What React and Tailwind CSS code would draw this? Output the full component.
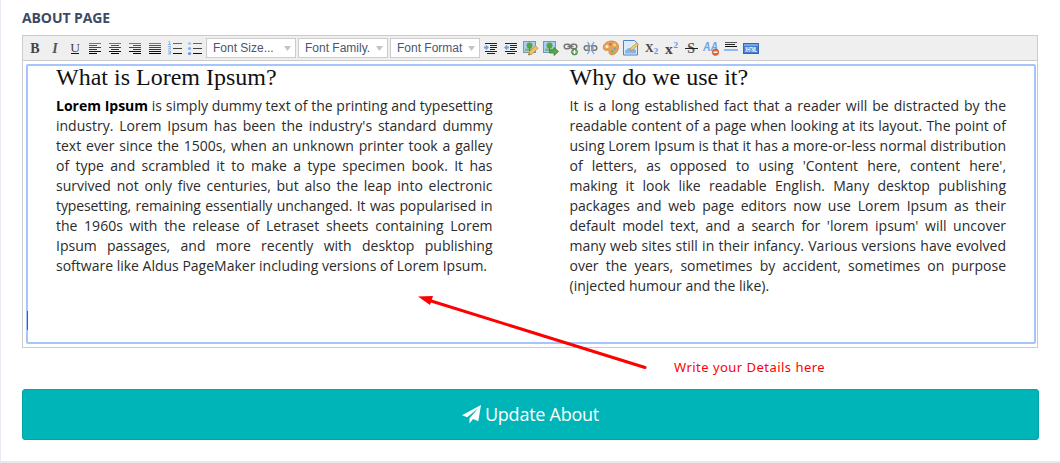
import React from "react";

function Icon({ children, label }) {
  return (
    <svg className="block h-5 w-5 shrink-0" viewBox="0 0 20 20" role="img" aria-label={label}>
      {children}
    </svg>
  );
}

function Lines({ label, rows }) {
  return (
    <Icon label={label}>
      {rows.map(([x, w], i) => (
        <rect key={i} x={x} y={[5, 7, 9, 11, 13, 15][i]} width={w} height="1" fill={["#777", "#555", "#444", "#333", "#111", "#000"][i]} />
      ))}
    </Icon>
  );
}

function ListIcon({ label, children }) {
  return (
    <Icon label={label}>
      {children}
      <rect x="8" y="5" width="9" height="1" fill="#666" />
      <rect x="8" y="10" width="9" height="1" fill="#444" />
      <rect x="8" y="15" width="9" height="1" fill="#111" />
    </Icon>
  );
}

function IndentIcon({ label, out }) {
  return (
    <Icon label={label}>
      <path d="M4 5.500h12M9 7.500h7M9 9.500h7M9 11.500h5M4 13.500h12M6 15.500h8" stroke="#222" />
      {out ? (
        <path d="M3 9.500 6.200 6.500v2H8v2H6.200v2z" fill="#6ba2f0" />
      ) : (
        <path d="M8 9.500 4.800 6.500v2H3v2h1.800v2z" fill="#6ba2f0" />
      )}
    </Icon>
  );
}

function Picture() {
  return (
    <>
      <rect x="2.500" y="3.500" width="12" height="11" fill="#a9cdf4" stroke="#7594c8" />
      <rect x="4" y="10.500" width="9" height="2.500" fill="#7dbb68" />
      <circle cx="8.500" cy="7.500" r="3" fill="#55a643" />
      <path d="M8.500 9v4" stroke="#6b7f42" />
    </>
  );
}

function Chain() {
  return (
    <g fill="none" stroke="#777" strokeWidth="1.500">
      <rect x="3.200" y="6.200" width="6" height="4.600" rx="2.300" />
      <rect x="9.800" y="6.200" width="6" height="4.600" rx="2.300" />
      <path d="M6.500 8.500h6" />
    </g>
  );
}

function Select({ text }) {
  return (
    <div className="flex h-5 w-[90px] shrink-0 items-center justify-between border border-[#ccc] bg-white pr-1 pl-[6px] font-['Liberation_Sans',Arial,sans-serif] text-[12px] leading-[18px] text-[#4a5672]">
      <span className="whitespace-nowrap">{text}</span>
      <svg className="h-[5px] w-[7px]" viewBox="0 0 7 5" aria-hidden="true">
        <path d="M0 0h7L3.500 5z" fill="#c4c4c4" />
      </svg>
    </div>
  );
}

function Toolbar() {
  const serif = "Liberation Serif, serif";
  return (
    <div className="flex h-[25px] items-start border-b border-[#ccc] bg-[#efefef] pt-[2px] pl-[2px]">
      <Icon label="Bold">
        <text x="10" y="14.500" textAnchor="middle" fontFamily={serif} fontWeight="700" fontSize="14" fill="#444">B</text>
      </Icon>
      <Icon label="Italic">
        <text x="10" y="14.500" textAnchor="middle" fontFamily={serif} fontWeight="700" fontStyle="italic" fontSize="14" fill="#555">I</text>
      </Icon>
      <Icon label="Underline">
        <text x="10" y="13.500" textAnchor="middle" fontFamily={serif} fontSize="13.500" fill="#444">U</text>
        <rect x="6" y="15" width="8" height="1" fill="#111" />
      </Icon>
      <Lines label="Align left" rows={[[4, 12], [4, 8], [4, 12], [4, 8], [4, 12], [4, 8]]} />
      <Lines label="Align center" rows={[[4, 12], [6, 8], [4, 12], [6, 8], [4, 12], [6, 8]]} />
      <Lines label="Align right" rows={[[4, 12], [8, 8], [4, 12], [8, 8], [4, 12], [8, 8]]} />
      <Lines label="Justify" rows={[[4, 12], [4, 12], [4, 12], [4, 12], [4, 12], [4, 12]]} />
      <ListIcon label="Numbered list">
        <path d="M3.500 3.500h1v3M3 6.500h3M3 8.500h2.500v1l-2 1.500H6M3 13h2.500v3H3M3.500 14.500h2" fill="none" stroke="#8ab2ee" />
      </ListIcon>
      <ListIcon label="Bullet list">
        <circle cx="4.500" cy="5.500" r="1.600" fill="#a5c5f5" />
        <circle cx="4.500" cy="10.500" r="1.600" fill="#83b0f2" />
        <circle cx="4.500" cy="15.500" r="1.600" fill="#5f9aed" />
      </ListIcon>
      <div className="flex gap-[2px] px-px">
        <Select text="Font Size..." />
        <Select text="Font Family." />
        <Select text="Font Format" />
      </div>
      <IndentIcon label="Indent" />
      <IndentIcon label="Outdent" out />
      <Icon label="Edit image">
        <Picture />
        <path d="m7.500 17 .8-3.200 6.200-6 2.500 2.500-6.200 6z" fill="#f5c261" stroke="#c48c37" strokeWidth=".8" />
        <path d="m7.500 17 .5-1.800 1.300 1.300z" fill="#654" />
      </Icon>
      <Icon label="Insert image">
        <Picture />
        <path d="M8.500 12h4.500V9.500l4.500 4-4.500 4V15H8.500z" fill="#55a84c" stroke="#37823a" strokeWidth=".8" />
      </Icon>
      <Icon label="Add link">
        <Chain />
        <circle cx="13.500" cy="14" r="3" fill="#53a84e" stroke="#3b8340" strokeWidth=".7" />
        <path d="M11.500 14h4M13.500 12v4" stroke="#fff" strokeWidth="1.200" />
      </Icon>
      <Icon label="Remove link">
        <g transform="translate(0 1.500)"><Chain /></g>
        <path d="M9.500 8.500v4" stroke="#efefef" strokeWidth="1.500" />
        <path d="m6.500 4 2.500 4m4-4-2.500 4M6.500 16 9 12m4 4-2.500-4" stroke="#65a4ed" strokeWidth="1.300" />
      </Icon>
      <Icon label="Color">
        <path d="M17.500 8.500C17.500 5 14 3 10.500 3 6 3 2.300 6 2.300 9.500c0 3 2.400 3 4.200 2.700 1.700-.2 1.500 1 1.500 2.300 0 1.500 1.500 2.300 3 2.300 4 0 6.500-4.500 6.500-8.300z" fill="#e5a15b" stroke="#c08344" strokeWidth=".8" />
        <circle cx="6" cy="8.500" r="1.600" fill="#fff3c5" />
        <circle cx="9.500" cy="6.300" r="1.300" fill="#e46545" />
        <circle cx="13.500" cy="7" r="1.400" fill="#f8df60" />
        <circle cx="13.800" cy="10.500" r="1.300" fill="#6ba6d9" />
        <circle cx="11.300" cy="13.500" r="1.400" fill="#72b45d" />
      </Icon>
      <Icon label="Background color">
        <path d="M2.500 2.500h11l3 3v11.500h-14z" fill="#dceafa" stroke="#4c83c6" />
        <path d="M4 13c3.500-4 6-4 11-1v3.500H4z" fill="#83b5eb" />
        <path d="m9 12.500.8-2.200 6-5.800 1.700 1.700-6 5.800z" fill="#f3ce78" stroke="#b98d42" strokeWidth=".7" />
      </Icon>
      <Icon label="Subscript">
        <text x="4" y="13.500" fontFamily={serif} fontWeight="700" fontSize="12" fill="#444">X</text>
        <text x="12.700" y="16" fontFamily={serif} fontWeight="700" fontSize="9" fill="#5b96e6">2</text>
      </Icon>
      <Icon label="Superscript">
        <text x="4" y="15.500" fontFamily={serif} fontWeight="700" fontSize="15.500" fill="#444">x</text>
        <text x="12.500" y="10" fontFamily={serif} fontWeight="700" fontSize="9" fill="#5b96e6">2</text>
      </Icon>
      <Icon label="Strikethrough">
        <text x="10.200" y="15" textAnchor="middle" fontFamily={serif} fontWeight="700" fontSize="14" fill="#555">S</text>
        <rect x="4" y="10" width="13" height="1" fill="#222" />
      </Icon>
      <Icon label="Remove format">
        <text x="2" y="13" fontFamily="Liberation Sans, sans-serif" fontStyle="italic" fontWeight="700" fontSize="13" textLength="15" lengthAdjust="spacingAndGlyphs" fill="#68a5e5">AA</text>
        <circle cx="14.500" cy="14.200" r="3.200" fill="#e66535" stroke="#be4825" strokeWidth=".6" />
        <rect x="12.500" y="13.500" width="4" height="1.400" fill="#fff" />
      </Icon>
      <Icon label="Horizontal rule">
        <rect x="4" y="4" width="12" height="1" fill="#555" />
        <rect x="4" y="6" width="10" height="1" fill="#222" />
        <rect x="4" y="8" width="12" height="1" fill="#111" />
        <rect x="3" y="11" width="14" height="2" fill="#8fb9f3" />
      </Icon>
      <Icon label="Edit HTML">
        <rect x="2.500" y="5.500" width="15" height="10" fill="#437fd0" stroke="#3269b8" />
        <rect x="3" y="6" width="14" height="2" fill="#72a7e8" />
        <text x="4" y="13.700" fontFamily="Liberation Sans, sans-serif" fontWeight="700" fontSize="6.500" textLength="12" lengthAdjust="spacingAndGlyphs" fill="#fff">XHTML</text>
      </Icon>
    </div>
  );
}

function Article({ title, children }) {
  return (
    <section className="-mt-px w-[436.500px]">
      <h2 className="font-['Liberation_Serif',serif] text-[24px] leading-6 text-[#111]">{title}</h2>
      <p className="mt-[7px] text-justify text-[14px] leading-5 text-[#2b2b2b]">{children}</p>
    </section>
  );
}

export default function App() {
  return (
    <main className="relative h-[463px] w-[1060px] overflow-hidden border-b-2 border-l border-b-[#e6e8ee] border-l-[#e9ebf3] bg-white font-['Open_Sans',sans-serif]">
      <div className="pt-2 pl-[21px]">
        <h1 className="h-[27px] text-[14px] leading-5 font-bold tracking-[-0.1px] text-[#3c4a65]">ABOUT PAGE</h1>
        <div className="h-[313px] w-[1016px] border border-[#ccc]">
          <Toolbar />
          <div className="mt-[3px] ml-[3px] flex h-[280px] w-[1010px] rounded-[2px] border-2 border-[#a6c5fb] pl-7">
            <Article title="What is Lorem Ipsum?">
              <strong className="font-bold text-black">Lorem Ipsum</strong> is simply dummy text of the printing and typesetting industry. Lorem Ipsum has been the industry's standard dummy text ever since the 1500s, when an unknown printer took a galley of type and scrambled it to make a type specimen book. It has survived not only five centuries, but also the leap into electronic <span className="tracking-[-0.1px]">typesetting, remaining essentially unchanged. It was popularised in</span> the 1960s with the release of Letraset sheets containing Lorem Ipsum passages, and more recently with desktop publishing software like Aldus PageMaker including versions of Lorem Ipsum.
            </Article>
            <div className="w-[77px]" />
            <Article title="Why do we use it?">
              It is a long established fact that a reader will be distracted by the readable content of a page when looking at its layout. The point of using Lorem Ipsum is that it has a more-or-less normal distribution of letters, as opposed to using 'Content here, content here', making it look like readable English. Many desktop publishing packages and web page editors now use Lorem Ipsum as their default model text, and a search for 'lorem ipsum' will uncover many web sites still in their infancy. Various versions have evolved over the years, sometimes by accident, sometimes on purpose (injected humour and the like).
            </Article>
          </div>
        </div>
        <button className="mt-[41px] flex h-[51px] w-[1017px] items-center justify-center gap-1 rounded-[3px] border border-[#00a5a8] bg-[#00b5b8] text-[18px] text-white">
          <svg className="h-[19px] w-[19px]" viewBox="0 0 19 19" aria-hidden="true">
            <path d="M19 0 16.300 16.200 11 14 7.500 18.500V13.200L16.500 3 5.200 12.300 0 10.300z" fill="#fff" />
          </svg>
          <span className="tracking-[-0.25px]">Update About</span>
        </button>
      </div>
      <div className="absolute top-[311px] left-[26px] h-[19px] w-px bg-[#3c5c9c]" />
      <svg className="absolute top-[290px] left-[409px] h-[85px] w-[245px]" viewBox="410 290 245 85" aria-hidden="true">
        <path d="m428 300 217 67.500" stroke="#f00" strokeWidth="3" strokeLinecap="round" />
        <path d="m418 296.500 15-.5-3 9z" fill="#f00" />
      </svg>
      <span className="absolute top-[358px] left-[673px] font-['Noto_Sans',sans-serif] text-[13px] leading-[18px] tracking-[0.47px] whitespace-nowrap text-[#f00]">Write your Details here</span>
    </main>
  );
}
